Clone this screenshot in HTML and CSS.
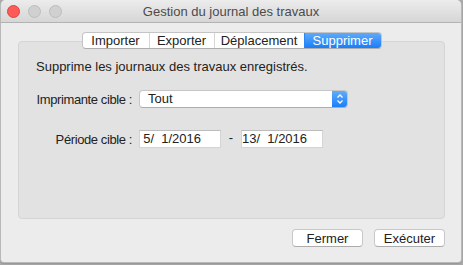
FILE: index.html
```html
<!DOCTYPE html>
<html lang="fr">
<head>
    <meta charset="UTF-8">
    <title>Gestion du journal des travaux</title>
    <link rel="stylesheet" href="styles.css">
</head>
<body>
<div class="window">
    <div class="titlebar">
        <div class="lights">
            <span class="light close"></span>
            <span class="light"></span>
            <span class="light"></span>
        </div>
        <div class="title">Gestion du journal des travaux</div>
        <div></div>
    </div>

    <div class="content">
        <div class="tabs">
            <span class="tab" style="width: 66px">Importer</span>
            <span class="tab" style="width: 65px">Exporter</span>
            <span class="tab" style="width: 90px">Déplacement</span>
            <span class="tab selected" style="width: 77px">Supprimer</span>
        </div>

        <div class="box">
            <p class="desc">Supprime les journaux des travaux enregistrés.</p>

            <div class="form">
                <label>Imprimante cible :</label>
                <div class="popup">
                    <span class="popup-value">Tout</span>
                    <span class="stepper">
                        <svg width="8" height="12" viewBox="0 0 8 12">
                            <path d="M1.5 4.5 L4 2 L6.5 4.5 M1.5 7.5 L4 10 L6.5 7.5" fill="none" stroke="#fff" stroke-width="1.3"/>
                        </svg>
                    </span>
                </div>

                <label>Période cible :</label>
                <div class="range">
                    <span class="date">5/  1/2016</span>
                    <span class="dash">-</span>
                    <span class="date">13/  1/2016</span>
                </div>
            </div>
        </div>

        <div class="buttons">
            <button class="btn">Fermer</button>
            <button class="btn">Exécuter</button>
        </div>
    </div>
</div>
</body>
</html>
```

FILE: styles.css
```css
html, body {
    margin: 0;
    height: 265px;
    overflow: hidden;
}

body {
    background-color: #a9a9a9;
    font-family: "Liberation Sans", Arial, sans-serif;
    font-size: 13px;
    color: #222;
}

.window {
    margin: 0 2px 0 1px;
    height: 262px;
    background-color: #ececec;
    border-radius: 5px 5px 3px 3px;
    box-shadow: 0 0 0 1px #b8b8b8, 0 1px 2px #6a6a6a;
    display: flex;
    flex-direction: column;
}

.titlebar {
    height: 22px;
    display: grid;
    grid-template-columns: 1fr auto 1fr;
    align-items: center;
    background: linear-gradient(#ececec, #d6d6d6);
    border-bottom: 1px solid #b3b3b3;
    border-radius: 5px 5px 0 0;
}

.lights {
    display: flex;
    gap: 8px;
    padding-left: 6px;
}

.light {
    width: 11px;
    height: 11px;
    border-radius: 50%;
    background-color: #d0d0d0;
    border: 0.5px solid #bdbdbd;
}

.light.close {
    background-color: #fc5b57;
    border-color: #e0443e;
}

.title {
    color: #4b4b4b;
    font-size: 13px;
}

.content {
    padding: 9px 16px 0 17px;
    display: flex;
    flex-direction: column;
}

.tabs {
    align-self: center;
    display: flex;
    height: 15px;
    margin-bottom: -8px;
    background-color: white;
    border: 1px solid #c4c4c4;
    border-bottom-color: #adadad;
    border-radius: 4px;
    overflow: hidden;
    position: relative;
    z-index: 1;
}

.tab {
    line-height: 15px;
    text-align: center;
    box-sizing: border-box;
    border-left: 1px solid #d6d6d6;
}

.tab:first-child {
    border-left: none;
}

.tab.selected {
    background: linear-gradient(#5eaafb, #1a7ef8);
    color: white;
    border-left-color: #2d86f6;
}

.box {
    height: 178px;
    background-color: #e2e2e2;
    border: 1px solid #d5d5d5;
    border-radius: 4px;
    padding: 17px 0 0 17px;
    box-sizing: border-box;
}

.desc {
    margin: 0;
    line-height: 16px;
}

.form {
    display: grid;
    grid-template-columns: 96px auto;
    column-gap: 7px;
    row-gap: 22px;
    align-items: center;
    margin-top: 15px;
}

.form label {
    text-align: right;
    white-space: nowrap;
    letter-spacing: -0.4px;
}

.popup {
    width: 209px;
    height: 18px;
    box-sizing: border-box;
    display: flex;
    background-color: white;
    border: 1px solid #c6c6c6;
    border-bottom-color: #adadad;
    border-radius: 4px;
    overflow: hidden;
}

.popup-value {
    flex: 1;
    padding-left: 8px;
    line-height: 16px;
}

.stepper {
    width: 15px;
    display: flex;
    align-items: center;
    justify-content: center;
    background: linear-gradient(#62acfb, #1b7ff7);
}

.range {
    display: flex;
    align-items: center;
}

.date {
    width: 82px;
    height: 18px;
    box-sizing: border-box;
    background-color: white;
    border: 1px solid #d4d4d4;
    border-top-color: #bcbcbc;
    text-align: right;
    padding-right: 19px;
    line-height: 16px;
    white-space: pre;
}

.dash {
    width: 20px;
    text-align: center;
    position: relative;
    top: -2px;
}

.buttons {
    display: flex;
    justify-content: flex-end;
    gap: 11px;
    margin-top: 10px;
}

.btn {
    width: 71px;
    height: 18px;
    font-family: "Liberation Sans", Arial, sans-serif;
    font-size: 13px;
    color: #222;
    background-color: white;
    border: 1px solid #c8c8c8;
    border-bottom-color: #acacac;
    border-radius: 4px;
    padding: 0;
}
```
